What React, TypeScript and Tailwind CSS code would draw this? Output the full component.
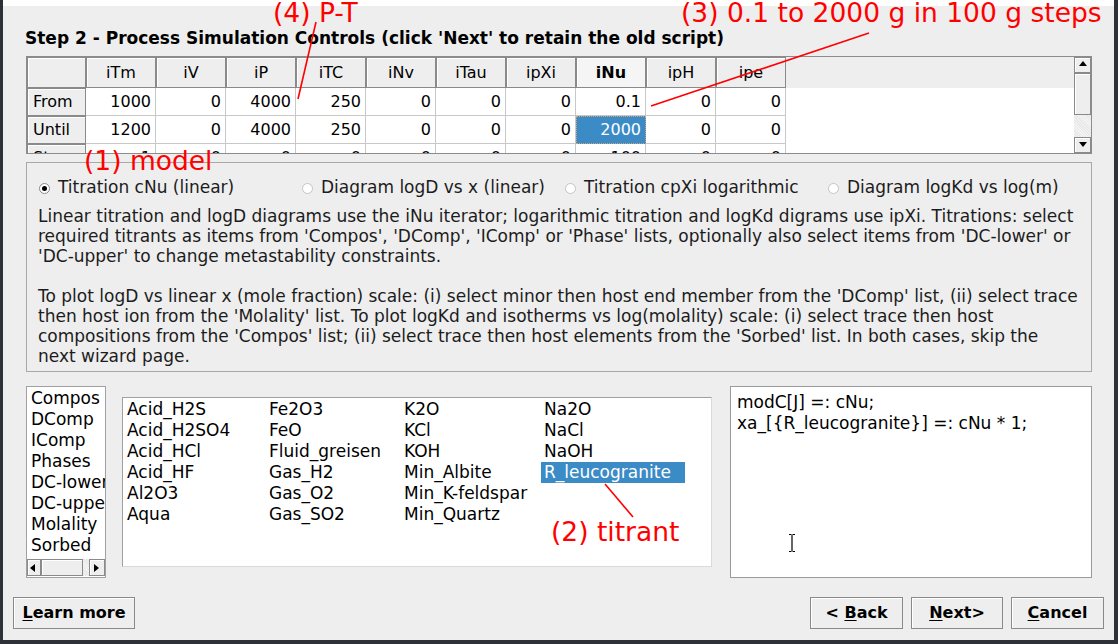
import React from "react"

const cols = ["iTm", "iV", "iP", "iTC", "iNv", "iTau", "ipXi", "iNu", "ipH", "ipe"]

const rows: [string, string[]][] = [
  ["From", ["1000", "0", "4000", "250", "0", "0", "0", "0.1", "0", "0"]],
  ["Until", ["1200", "0", "4000", "250", "0", "0", "0", "2000", "0", "0"]],
  ["Step", ["1", "0", "0", "0", "0", "0", "0", "100", "0", "0"]],
]

const sources = ["Compos", "DComp", "IComp", "Phases", "DC-lower", "DC-upper", "Molality", "Sorbed"]

const items = [
  "Acid_H2S", "Acid_H2SO4", "Acid_HCl", "Acid_HF", "Al2O3", "Aqua",
  "Fe2O3", "FeO", "Fluid_greisen", "Gas_H2", "Gas_O2", "Gas_SO2",
  "K2O", "KCl", "KOH", "Min_Albite", "Min_K-feldspar", "Min_Quartz",
  "Na2O", "NaCl", "NaOH", "R_leucogranite",
]

const modes = [
  "Titration cNu (linear)",
  "Diagram logD vs x (linear)",
  "Titration cpXi logarithmic",
  "Diagram logKd vs log(m)",
]

const help = [
  "Linear titration and logD diagrams use the iNu iterator; logarithmic titration and logKd digrams use ipXi. Titrations: select",
  "required titrants as items from 'Compos', 'DComp', 'IComp' or 'Phase' lists, optionally also select items from 'DC-lower' or",
  "'DC-upper' to change metastability constraints.",
  "",
  "To plot logD vs linear x (mole fraction) scale: (i) select minor then host end member from the 'DComp' list, (ii) select trace",
  "then host ion from the 'Molality' list. To plot logKd and isotherms vs log(molality) scale: (i) select trace then host",
  "compositions from the 'Compos' list; (ii) select trace then host elements from the 'Sorbed' list. In both cases, skip the",
  "next wizard page.",
]

function Arrow({ dir }: { dir: "up" | "down" | "left" | "right" }) {
  const pts = {
    up: "1,6 9,6 5,1",
    down: "1,2 9,2 5,7",
    left: "6,1 6,9 1,5",
    right: "2,1 2,9 7,5",
  }[dir]
  return (
    <svg width="10" height="10" viewBox="0 0 10 10">
      <polygon points={pts} fill="#000" />
    </svg>
  )
}

function Raised({ className = "", children }: { className?: string; children?: React.ReactNode }) {
  return (
    <div className={`flex items-center justify-center bg-[#eeeeee] border border-[#8a8a8a] shadow-[inset_1px_1px_0_#ffffff] ${className}`}>
      {children}
    </div>
  )
}

function Button({ mnemonic, rest, pre = "", className = "" }: { mnemonic: string; rest: string; pre?: string; className?: string }) {
  return (
    <button className={`h-[32px] bg-[#eeeeee] border border-[#8a8a8a] shadow-[inset_1px_1px_0_#ffffff] text-[16px] font-bold text-black ${className}`}>
      {pre}
      <span className="underline underline-offset-2">{mnemonic}</span>
      {rest}
    </button>
  )
}

export default function App() {
  return (
    <div className="relative w-[1118px] h-[644px] bg-[#2e3138] pl-[3px] pr-[4px] pb-[4px] flex flex-col font-['DejaVu_Sans',sans-serif] text-black overflow-hidden">
      <div className="h-[6px] bg-white shrink-0" />
      <div className="flex-1 bg-[#eeeeee] flex flex-col">
        <div className="pl-[23px] pr-[22px] flex flex-col">
          <h1 className="pt-[22px] -ml-px text-[17px] leading-[20px] font-bold">
            Step 2 - Process Simulation Controls (click 'Next' to retain the old script)
          </h1>

          {/* iterator table */}
          <div className="mt-[8px] h-[98px] border border-[#8c8c8c] flex overflow-hidden">
            <div className="flex-1 flex flex-col bg-white">
              <div className="flex h-[31px] shrink-0 bg-[#eeeeee] text-[16px]">
                <Raised className="w-[59px]" />
                {cols.map((c) => (
                  <Raised
                    key={c}
                    className={`w-[70px] ${c === "iNu" ? "font-bold bg-[#f5f5f5]" : ""}`}
                  >
                    {c}
                  </Raised>
                ))}
                <div className="flex-1" />
              </div>
              {rows.map(([label, vals], r) => (
                <div key={label} className="flex h-[28px] shrink-0 text-[16px]">
                  <div className="w-[59px] bg-[#eeeeee] border border-[#8a8a8a] shadow-[inset_1px_1px_0_#ffffff] pl-[5px] flex items-center">
                    {label}
                  </div>
                  {vals.map((v, i) => {
                    const sel = r === 1 && i === 7
                    return (
                      <div
                        key={i}
                        className={`w-[70px] flex items-center justify-end pr-[4px] border-r border-b ${
                          sel
                            ? "bg-[#3a8bc6] text-white border border-dotted border-[#d9a070]"
                            : "border-[#c8c8c8]"
                        }`}
                      >
                        {v}
                      </div>
                    )
                  })}
                  <div className="flex-1" />
                </div>
              ))}
            </div>
            <div className="w-[17px] flex flex-col bg-[#e4e4e4]">
              <Raised className="h-[16px]">
                <Arrow dir="up" />
              </Raised>
              <Raised className="h-[42px]" />
              <div className="flex-1 bg-[repeating-linear-gradient(45deg,#e8e8e8_0px,#e8e8e8_1px,#f4f4f4_1px,#f4f4f4_2px)]" />
              <Raised className="h-[16px]">
                <Arrow dir="down" />
              </Raised>
            </div>
          </div>

          {/* mode panel */}
          <div className="mt-[8px] h-[210px] border border-[#a8a8a8] pt-[15px] pl-[12px] text-[17px] text-[#1c1c1c]">
            <div className="flex h-[20px] items-center">
              {modes.map((m, i) => (
                <div key={m} className={`flex items-center gap-[8px] ${i < 3 ? "w-[263px]" : ""}`}>
                  <span
                    className={`w-[11px] h-[11px] rounded-full border flex items-center justify-center bg-white ${
                      i === 0 ? "border-[#8a8a8a]" : "border-[#c4c4c4]"
                    }`}
                  >
                    {i === 0 && <span className="w-[5px] h-[5px] rounded-full bg-black" />}
                  </span>
                  <span>{m}</span>
                </div>
              ))}
            </div>
            <div className="mt-[8px] -ml-px leading-[20px]">
              {help.map((l, i) => (
                <div key={i} className="h-[20px] whitespace-nowrap">
                  {l}
                </div>
              ))}
            </div>
          </div>

          {/* lists */}
          <div className="mt-[14px] h-[192px] flex items-center text-[17px]">
            <div className="w-[80px] h-full bg-white border border-[#a0a0a0] flex flex-col">
              <div className="flex-1 overflow-hidden pt-px pl-[4px] leading-[21px] whitespace-nowrap">
                {sources.map((s) => (
                  <div key={s}>{s}</div>
                ))}
              </div>
              <div className="h-[17px] mb-px flex bg-[#e4e4e4]">
                <Raised className="w-[14px]">
                  <Arrow dir="left" />
                </Raised>
                <Raised className="w-[42px]" />
                <div className="flex-1 bg-[repeating-linear-gradient(45deg,#e8e8e8_0px,#e8e8e8_1px,#f4f4f4_1px,#f4f4f4_2px)]" />
                <Raised className="w-[16px]">
                  <Arrow dir="right" />
                </Raised>
              </div>
            </div>

            <div className="ml-[16px] w-[590px] h-[170px] bg-white border border-[#a0a0a0] border-r-[#dadada] border-b-[#dadada] pt-px pl-px">
              <div className="grid grid-flow-col grid-rows-6 grid-cols-[142px_135px_140px_144px] leading-[21px]">
                {items.map((it) => (
                  <div
                    key={it}
                    className={`pl-[3px] whitespace-nowrap ${it === "R_leucogranite" ? "bg-[#3a8bc6] text-white" : ""}`}
                  >
                    {it}
                  </div>
                ))}
              </div>
            </div>

            <div className="relative ml-[18px] flex-1 h-full bg-white border border-[#9a9a9a] pt-[5px] pl-[6px] text-[17px] leading-[21px] whitespace-nowrap">
              <div>modC[J] =: cNu;</div>
              <div>xa_[{"{"}R_leucogranite{"}"}] =: cNu * 1;</div>
              <svg className="absolute left-[57px] top-[146px]" width="8" height="20" viewBox="0 0 8 20">
                <path d="M1 1.5h2.5M4.5 1.5h2.5M4 2v16M1 18.5h2.5M4.5 18.5h2.5" stroke="#fff" strokeWidth="3" fill="none" />
                <path d="M1 1.5h2.5M4.5 1.5h2.5M4 2v16M1 18.5h2.5M4.5 18.5h2.5" stroke="#000" strokeWidth="1.2" fill="none" />
              </svg>
            </div>
          </div>
        </div>

        {/* buttons */}
        <div className="mt-[19px] pl-[10px] pr-[10px] flex items-center">
          <Button mnemonic="L" rest="earn more" className="w-[122px]" />
          <div className="flex-1" />
          <div className="flex gap-[8px]">
            <Button pre="< " mnemonic="B" rest="ack" className="w-[93px]" />
            <Button mnemonic="N" rest="ext>" className="w-[92px]" />
            <Button mnemonic="C" rest="ancel" className="w-[93px]" />
          </div>
        </div>
      </div>

      {/* annotations */}
      <svg className="absolute inset-0 pointer-events-none" width="1118" height="644">
        <line x1="298" y1="99" x2="316" y2="22" stroke="#ff0000" strokeWidth="1.6" />
        <line x1="651" y1="106" x2="869" y2="33" stroke="#ff0000" strokeWidth="1.6" />
        <line x1="605" y1="484" x2="633" y2="517" stroke="#ff0000" strokeWidth="1.6" />
      </svg>
      <span className="absolute left-[273px] top-0 text-[26.5px] leading-[26px] text-[#ff0000] whitespace-nowrap">(4) P-T</span>
      <span className="absolute left-[681px] top-0 text-[26.5px] leading-[26px] text-[#ff0000] whitespace-nowrap">
        (3) 0.1 to 2000 g in 100 g steps
      </span>
      <span className="absolute left-[84px] top-[148px] text-[26.5px] leading-[26px] text-[#ff0000] whitespace-nowrap">(1) model</span>
      <span className="absolute left-[551px] top-[519px] text-[26.5px] leading-[26px] text-[#ff0000] whitespace-nowrap">(2) titrant</span>
    </div>
  )
}
